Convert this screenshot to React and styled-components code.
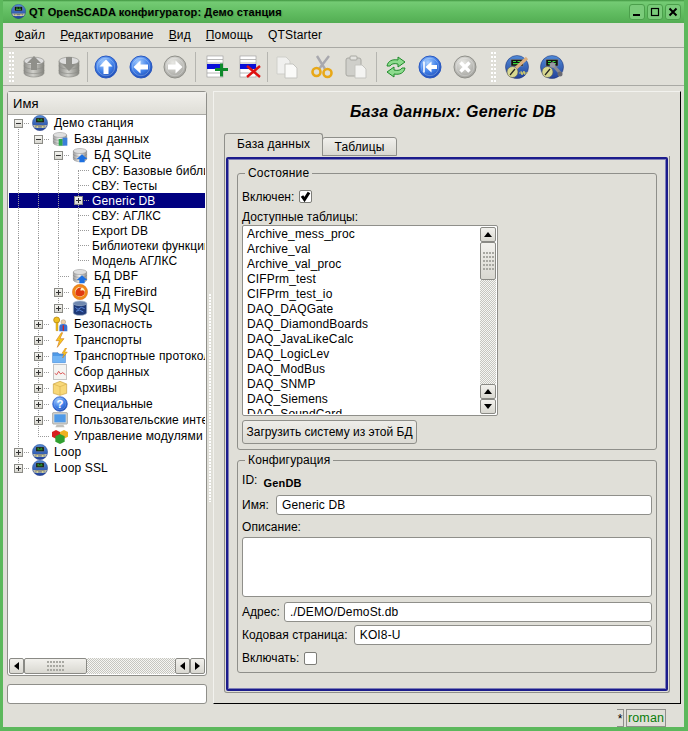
import styled, { createGlobalStyle, css } from "styled-components";

const GlobalStyle = createGlobalStyle`
  html, body {
    margin: 0;
    padding: 0;
    background: #e0dfd8;
  }
  * {
    box-sizing: border-box;
  }
`;

const BG = "#e0dfd8";
const LINE = "#8f8f8a";
const GREEN = "#5cb85c";

const Window = styled.div`
  width: 688px;
  height: 731px;
  display: flex;
  flex-direction: column;
  overflow: hidden;
  background: ${BG};
  border-left: 3px solid ${GREEN};
  border-right: 4px solid ${GREEN};
  border-bottom: 4px solid ${GREEN};
  font-family: "Liberation Sans", Arial, sans-serif;
  font-size: 12px;
  letter-spacing: 0.15px;
  color: #000;
`;

const TitleBar = styled.div`
  height: 23px;
  margin: 0 -4px 0 -3px;
  padding: 0 7px 0 11px;
  display: flex;
  align-items: center;
  flex: none;
  background: linear-gradient(#3f953f 0, #74cb74 2px, #5fbb5f 60%, #53ad53 100%);
`;

const TitleText = styled.div`
  margin-left: 3px;
  flex: 1;
  font-weight: bold;
  font-size: 11px;
  letter-spacing: 0.12px;
  text-shadow: 1px 1px 1px #4a9f4a;
`;

const WinButton = styled.div`
  width: 16px;
  height: 16px;
  margin-left: 2px;
  display: flex;
  align-items: center;
  justify-content: center;
  border: 1px solid #4b9f4b;
  border-radius: 3px;
  background: #7acb7a;
`;

const MenuBar = styled.div`
  height: 24px;
  padding-left: 12px;
  display: flex;
  align-items: center;
  gap: 15px;
  flex: none;
`;

const MenuItem = styled.span`
  white-space: nowrap;
`;

const Mnemonic = styled.span`
  text-decoration: underline;
`;

const ToolBar = styled.div`
  height: 39px;
  padding-left: 6px;
  display: flex;
  align-items: center;
  flex: none;
  border-top: 1px solid #a9a9a4;
  border-bottom: 1px solid #a9a9a4;
`;

const Handle = styled.div`
  width: 6px;
  height: 30px;
  margin: 0 ${(p) => p.$after}px 0 ${(p) => p.$before || 0}px;
  flex: none;
  background: radial-gradient(circle at 1px 1px, #fff 1px, #b8b8b2 1.2px, transparent 1.6px) 0 0 / 3px 4px;
`;

const ToolButton = styled.div`
  width: ${(p) => p.$w || 34.5}px;
  height: 30px;
  display: flex;
  align-items: center;
  justify-content: center;
  flex: none;
`;

const ToolSep = styled.div`
  width: 1px;
  height: 30px;
  margin: 0 ${(p) => p.$after}px 0 ${(p) => p.$before}px;
  flex: none;
  background: #b5b5b0;
`;

const Workspace = styled.div`
  height: 618px;
  flex: none;
  display: flex;
  padding: 5px 3px 0 4px;
`;

const LeftColumn = styled.div`
  width: 200px;
  display: flex;
  flex-direction: column;
  flex: none;
`;

const TreeFrame = styled.div`
  height: 585px;
  display: flex;
  flex-direction: column;
  flex: none;
  padding: 0 1px 1px 1px;
  border: 1px solid ${LINE};
  border-radius: 3px;
  background: #fff;
`;

const TreeHeader = styled.div`
  height: 23px;
  margin: 0 -1px;
  padding-left: 5px;
  display: flex;
  align-items: center;
  flex: none;
  font-size: 13px;
  border-bottom: 1px solid #a9a9a4;
  background: linear-gradient(#f1f0ec, #dfded7);
`;

const TreeBody = styled.div`
  flex: 1;
  min-height: 0;
  overflow: hidden;
`;

const TreeRow = styled.div`
  height: ${(p) => (p.$small ? 15 : 16)}px;
  display: flex;
  align-items: center;
  white-space: nowrap;
  ${(p) =>
    p.$selected &&
    css`
      background: #000080;
      color: #fff;
    `}
`;

const dotV = "repeating-linear-gradient(to bottom, #9a9a9a 0 1px, transparent 1px 2px)";
const dotH = "repeating-linear-gradient(to right, #9a9a9a 0 1px, transparent 1px 2px)";

const Guide = styled.div`
  width: 20px;
  align-self: stretch;
  flex: none;
  display: flex;
  align-items: center;
  padding-left: 5px;
  background-repeat: no-repeat;
  ${(p) => p.$kind === "pipe" && css`
    background-image: ${dotV};
    background-size: 1px 100%;
    background-position: 9px 0;
  `}
  ${(p) => p.$kind === "tee" && css`
    background-image: ${dotV}, ${dotH};
    background-size: 1px 100%, 11px 1px;
    background-position: 9px 0, 9px 50%;
  `}
  ${(p) => p.$kind === "end" && css`
    background-image: ${dotV}, ${dotH};
    background-size: 1px 50%, 11px 1px;
    background-position: 9px 0, 9px 50%;
  `}
  ${(p) => p.$kind === "start" && css`
    background-image: ${dotV}, ${dotH};
    background-size: 1px 50%, 11px 1px;
    background-position: 9px 100%, 9px 50%;
  `}
`;

const Expander = styled.div`
  width: 9px;
  height: 9px;
  border: 1px solid #8a8a85;
  background: linear-gradient(#f4f4f0, #d8d7d0);
  display: flex;
  align-items: center;
  justify-content: center;
  position: relative;
  &::before {
    content: "";
    width: 5px;
    height: 1px;
    background: #333;
  }
  ${(p) =>
    p.$plus &&
    css`
      &::after {
        content: "";
        position: absolute;
        left: 3px;
        top: 1px;
        width: 1px;
        height: 5px;
        background: #333;
      }
    `}
`;

const TreeIcon = styled.div`
  width: 16px;
  height: 16px;
  margin: 0 6px 0 3px;
  flex: none;
  display: flex;
`;

const TreeLabel = styled.span`
  margin-left: ${(p) => p.$indent || 0}px;
`;

const HScroll = styled.div`
  height: 16px;
  display: flex;
  flex: none;
`;

const VScroll = styled.div`
  width: 16px;
  display: flex;
  flex-direction: column;
  flex: none;
`;

const Track = styled.div`
  flex: 1;
  background: repeating-conic-gradient(#c6c6c0 0 25%, #f6f6f3 0 50%) 0 0 / 2px 2px;
`;

const ScrollBtn = styled.div`
  width: ${(p) => (p.$vertical ? "16px" : "15px")};
  height: ${(p) => (p.$vertical ? "15px" : "16px")};
  flex: none;
  display: flex;
  align-items: center;
  justify-content: center;
  border: 1px solid #8a8a85;
  border-radius: 2px;
  background: linear-gradient(#f2f1ed, #d9d8d1);
`;

const Arrow = styled.div`
  width: 0;
  height: 0;
  ${(p) => p.$dir === "left" && "border-top: 4px solid transparent; border-bottom: 4px solid transparent; border-right: 5px solid #000;"}
  ${(p) => p.$dir === "right" && "border-top: 4px solid transparent; border-bottom: 4px solid transparent; border-left: 5px solid #000;"}
  ${(p) => p.$dir === "up" && "border-left: 4px solid transparent; border-right: 4px solid transparent; border-bottom: 5px solid #000;"}
  ${(p) => p.$dir === "down" && "border-left: 4px solid transparent; border-right: 4px solid transparent; border-top: 5px solid #000;"}
`;

const Slider = styled.div`
  flex: none;
  display: flex;
  align-items: center;
  justify-content: center;
  border: 1px solid #8a8a85;
  border-radius: 2px;
  background: linear-gradient(#f2f1ed, #d9d8d1);
  width: ${(p) => p.$w}px;
  height: ${(p) => p.$h}px;
`;

const Grip = styled.div`
  width: ${(p) => p.$w}px;
  height: ${(p) => p.$h}px;
  background: radial-gradient(circle at 1px 1px, #a8a8a2 1px, transparent 1.2px) 0 0 / 3px 4px;
`;

const SearchBox = styled.div`
  height: 20px;
  margin-top: 8px;
  flex: none;
  border: 1px solid ${LINE};
  border-radius: 3px;
  background: #fff;
`;

const Splitter = styled.div`
  width: 6px;
  flex: none;
  display: flex;
  align-items: center;
  justify-content: center;
`;

const SplitterGrip = styled.div`
  width: 3px;
  height: 208px;
  background: radial-gradient(circle at 1px 1px, #fff 1px, #b5b5af 1.2px, transparent 1.6px) 0 0 / 3px 3px;
`;

const RightPanel = styled.div`
  width: 468px;
  height: 613px;
  flex: none;
  display: flex;
  flex-direction: column;
  padding: 0 10px 10px 10px;
  border-top: 1px solid #f2f2ee;
  border-left: 1px solid #f2f2ee;
  border-right: 1px solid #000;
  border-bottom: 1px solid #000;
`;

const PageTitle = styled.h1`
  height: 40px;
  margin: 0;
  display: flex;
  align-items: center;
  justify-content: center;
  flex: none;
  font-size: 16px;
  font-weight: bold;
  font-style: italic;
  letter-spacing: 0.3px;
  padding-left: 12px;
`;

const TabRow = styled.div`
  height: 23px;
  display: flex;
  align-items: flex-end;
  flex: none;
  margin-top: 1px;
`;

const Tab = styled.div`
  display: flex;
  align-items: center;
  justify-content: center;
  border: 1px solid ${LINE};
  border-radius: 3px 3px 0 0;
  ${(p) =>
    p.$active
      ? css`
          width: 99px;
          height: 23px;
          border-bottom: 0;
          background: ${BG};
          padding-bottom: 3px;
          position: relative;
          z-index: 1;
        `
      : css`
          width: 75px;
          height: 19px;
          margin-left: -1px;
          background: linear-gradient(#f1f0ec, #d9d8d1);
        `}
`;

const TabFrame = styled.div`
  flex: 1;
  min-height: 0;
  padding: 1px;
  border: 1px solid ${LINE};
  border-top: 0;
  border-radius: 0 0 3px 3px;
`;

const TabBody = styled.div`
  height: 100%;
  display: flex;
  flex-direction: column;
  gap: 3px;
  padding: 7px 9px 15px 9px;
  border: 2px solid #1c1c8c;
  border-radius: 2px;
  box-shadow: 0 0 0 1px #7f7fb8 inset;
`;

const Group = styled.fieldset`
  margin: 0;
  padding: 6px 4px 0 4px;
  border: 1px solid ${LINE};
  border-radius: 3px;
  display: flex;
  flex-direction: column;
  height: ${(p) => p.$h}px;
  flex: none;
  min-width: 0;
`;

const Legend = styled.legend`
  margin-left: 3px;
  padding: 0 3px;
  height: 14px;
  line-height: 14px;
`;

const FieldRow = styled.div`
  display: flex;
  align-items: center;
  flex: none;
  height: ${(p) => p.$h || 23}px;
  margin-top: ${(p) => p.$top || 0}px;
  padding-bottom: ${(p) => p.$pb || 0}px;
  white-space: nowrap;
  letter-spacing: 0.05px;
`;

const Check = styled.div`
  width: 13px;
  height: 13px;
  margin-left: ${(p) => p.$gap}px;
  flex: none;
  display: flex;
  align-items: center;
  justify-content: center;
  border: 1px solid #7d7d78;
  border-radius: 2px;
  background: #fff;
`;

const ListBox = styled.div`
  width: 256px;
  height: 191px;
  display: flex;
  flex: none;
  padding: 1px;
  border: 1px solid ${LINE};
  border-radius: 2px;
  background: #fff;
`;

const ListRows = styled.div`
  flex: 1;
  overflow: hidden;
  padding-left: 3px;
`;

const ListRow = styled.div`
  height: 15px;
  line-height: 15px;
  white-space: nowrap;
`;

const Button = styled.div`
  width: 175px;
  height: 24px;
  margin-top: 4px;
  display: flex;
  align-items: center;
  justify-content: center;
  flex: none;
  white-space: nowrap;
  letter-spacing: 0;
  border: 1px solid ${LINE};
  border-radius: 3px;
  background: linear-gradient(#eeede9, #dcdbd4);
`;

const IdLabel = styled.span`
  margin-top: -3px;
`;

const IdValue = styled.b`
  margin: 3px 0 0 6px;
  font-size: 11px;
  letter-spacing: 0.2px;
`;

const Input = styled.div`
  flex: 1;
  height: 20px;
  margin-left: ${(p) => p.$gap || 0}px;
  padding-left: 5px;
  display: flex;
  align-items: center;
  letter-spacing: 0.15px;
  border: 1px solid ${LINE};
  border-radius: 3px;
  background: #fff;
`;

const TextArea = styled.div`
  height: 60px;
  margin-top: 1px;
  flex: none;
  border: 1px solid ${LINE};
  border-radius: 3px;
  background: #fff;
`;

const StatusBar = styled.div`
  flex: 1;
  padding: 5px 18px 0 0;
  display: flex;
  justify-content: flex-end;
  align-items: flex-start;
  gap: 2px;
`;

const StatusStar = styled.div`
  width: 7px;
  height: 18px;
  display: flex;
  justify-content: center;
  border-top: 1px solid ${LINE};
  border-right: 1px solid ${LINE};
  border-bottom: 1px solid ${LINE};
  line-height: 18px;
  letter-spacing: 0;
`;

const StatusUser = styled.div`
  width: 40px;
  height: 18px;
  display: flex;
  align-items: center;
  justify-content: center;
  border: 1px solid ${LINE};
  color: #0a7d0a;
  font-size: 12.5px;
`;

const Defs = styled.svg`
  display: block;
  width: 0;
  height: 0;
  flex: none;
`;

const SharedDefs = () => (
  <Defs>
    <defs>
      <radialGradient id="blueBall" cx="40%" cy="30%" r="75%">
        <stop offset="0" stopColor="#a9d0ff" />
        <stop offset="0.55" stopColor="#3f7fe8" />
        <stop offset="1" stopColor="#1b48b0" />
      </radialGradient>
      <radialGradient id="greyBall" cx="40%" cy="30%" r="75%">
        <stop offset="0" stopColor="#e8e8e4" />
        <stop offset="1" stopColor="#a0a09b" />
      </radialGradient>
      <linearGradient id="stationBall" x1="0" y1="0" x2="0" y2="1">
        <stop offset="0" stopColor="#4f8ad8" />
        <stop offset="1" stopColor="#24439a" />
      </linearGradient>
      <linearGradient id="drum" x1="0" y1="0" x2="1" y2="0">
        <stop offset="0" stopColor="#9a9a9a" />
        <stop offset="0.45" stopColor="#efefef" />
        <stop offset="1" stopColor="#909090" />
      </linearGradient>
      <linearGradient id="greyDrum" x1="0" y1="0" x2="1" y2="0">
        <stop offset="0" stopColor="#8e8e8a" />
        <stop offset="0.45" stopColor="#cfcfca" />
        <stop offset="1" stopColor="#85857f" />
      </linearGradient>
    </defs>
  </Defs>
);

const Svg = ({ size = 24, children }) => (
  <svg width={size} height={size} viewBox="0 0 24 24">
    {children}
  </svg>
);

const Drum = ({ fill = "url(#drum)", stroke = "#7a7a7a" }) => (
  <g stroke={stroke} strokeWidth="0.6">
    <path d="M2 6v12c0 2 4.500 4 10 4s10-2 10-4V6z" fill={fill} />
    <ellipse cx="12" cy="6" rx="10" ry="3.800" fill="#dedede" />
    <path d="M2 10.500c0 2 4.500 3.600 10 3.600s10-1.600 10-3.600M2 15c0 2 4.500 3.600 10 3.600s10-1.600 10-3.600" fill="none" />
  </g>
);

const Station = ({ size, children }) => (
  <Svg size={size}>
    <circle cx="12" cy="12" r="11.500" fill="url(#stationBall)" stroke="#1c2f70" strokeWidth="0.5" />
    <rect x="6" y="4.500" width="12" height="6.500" fill="#111" stroke="#888" strokeWidth="0.5" />
    <path d="M8 6.500h3M12.500 6.500h3M8 8.700h8" stroke="#37d437" strokeWidth="1.200" />
    {children || (
      <g>
        <path d="M1.500 15h21l-2 4h-17z" fill="#b9b9a8" />
        <path d="M5 16.500h14" stroke="#444" strokeWidth="1" />
        <circle cx="8" cy="18" r="1.500" fill="#d8d890" />
        <circle cx="16" cy="18" r="1.500" fill="#d8d890" />
      </g>
    )}
  </Svg>
);

const Gauge = () => (
  <g>
    <circle cx="7.500" cy="17" r="5.500" fill="#d8d890" stroke="#555" strokeWidth="0.6" />
    <path d="M5 20l5-6" stroke="#222" strokeWidth="1.200" />
  </g>
);

const NavBall = ({ grey, children, size }) => (
  <Svg size={size}>
    <circle cx="12" cy="12" r="11" fill={grey ? "url(#greyBall)" : "url(#blueBall)"} stroke={grey ? "#90908a" : "#2a58c0"} />
    <circle cx="12" cy="12" r="8.700" fill="none" stroke="#fff" strokeOpacity="0.25" />
    {children}
  </Svg>
);

const TableIcon = ({ children }) => (
  <Svg>
    <rect x="2" y="1" width="16" height="21" fill="#fff" stroke="#999" strokeWidth="0.6" />
    <path d="M2 4.500h16M2 8h16M2 18h16" stroke="#9a9a9a" strokeWidth="0.7" />
    <rect x="2" y="9" width="16" height="5" fill="#0a10d8" />
    {children}
  </Svg>
);

const icons = {
  dbUp: (
    <Svg>
      <Drum fill="url(#greyDrum)" stroke="#8a8a85" />
      <path d="M12 1l7 7h-4v7H9V8H5z" fill="#8f8f8a" />
    </Svg>
  ),
  dbDown: (
    <Svg>
      <Drum fill="url(#greyDrum)" stroke="#8a8a85" />
      <path d="M12 16l7-7h-4V2H9v7H5z" fill="#8f8f8a" />
    </Svg>
  ),
  up: (
    <NavBall>
      <path d="M12 4.500l6.500 7h-4v7.500h-5v-7.500h-4z" fill="#fff" />
    </NavBall>
  ),
  left: (
    <NavBall>
      <path d="M4.500 12l7-6.500v4H19v5h-7.500v4z" fill="#fff" />
    </NavBall>
  ),
  right: (
    <NavBall grey>
      <path d="M19.500 12l-7-6.500v4H5v5h7.500v4z" fill="#fff" />
    </NavBall>
  ),
  add: (
    <TableIcon>
      <path d="M10 14.500h13M16.500 8.500v13" stroke="#0f8a2c" strokeWidth="3" />
    </TableIcon>
  ),
  del: (
    <TableIcon>
      <path d="M9 11l13 11M22 11L9 22" stroke="#e01010" strokeWidth="2.400" />
    </TableIcon>
  ),
  copy: (
    <Svg>
      <path d="M2 2h9l4 4v13H2z" fill="#f0f0ee" stroke="#cfcfca" />
      <path d="M10 9h8l4 4v10H10z" fill="#fafaf8" stroke="#c5c5c0" />
    </Svg>
  ),
  cut: (
    <Svg>
      <path d="M9 14L19 1M15 14L7 1" stroke="#a8a8ae" strokeWidth="2.400" />
      <circle cx="6.500" cy="17" r="4" fill="none" stroke="#e8a818" strokeWidth="2.600" />
      <circle cx="17.500" cy="18" r="4" fill="none" stroke="#e8a818" strokeWidth="2.600" />
    </Svg>
  ),
  paste: (
    <Svg>
      <rect x="2" y="3" width="15" height="18" rx="2" fill="#cfcfca" stroke="#a8a8a2" />
      <rect x="6" y="1" width="7" height="4" rx="1" fill="#e4e4e0" stroke="#a8a8a2" />
      <path d="M11 10h7l4 4v9H11z" fill="#f4f4f2" stroke="#c5c5c0" />
    </Svg>
  ),
  refresh: (
    <Svg>
      <path d="M3 11c1-5 5-7 11-6V2l7 5-7 5V9c-4-1-7 0-8 2z" fill="#8edb8e" stroke="#1f8a2a" />
      <path d="M21 13c-1 5-5 7-11 6v3l-7-5 7-5v3c4 1 7 0 8-2z" fill="#8edb8e" stroke="#1f8a2a" />
    </Svg>
  ),
  first: (
    <NavBall>
      <path d="M6 6.500v11" stroke="#fff" strokeWidth="1.600" />
      <path d="M7.500 12l6-5.500v3.500H19v4h-5.500v3.500z" fill="#fff" />
    </NavBall>
  ),
  stop: (
    <NavBall grey>
      <path d="M7.500 7.500l9 9M16.500 7.500l-9 9" stroke="#fff" strokeWidth="3.400" />
    </NavBall>
  ),
  stationEdit: (
    <Station>
      <Gauge />
      <path d="M14 18h9M16 16l1 4 2-4 1 4" stroke="#ece060" strokeWidth="0.8" fill="none" />
      <path d="M11 13L22 3" stroke="#dcb080" strokeWidth="3.200" />
    </Station>
  ),
  stationTool: (
    <Station>
      <Gauge />
      <path d="M12 9l9 10" stroke="#8a8a92" strokeWidth="3.200" />
      <circle cx="12.500" cy="10" r="2.800" fill="#9a9aa2" />
      <circle cx="20" cy="19" r="2.500" fill="#6a6a72" />
    </Station>
  ),
};

const treeIcons = {
  station: <Station size={16} />,
  dbs: (
    <Svg size={16}>
      <Drum />
      <rect x="10" y="12" width="6" height="10" fill="#2fa84f" />
      <rect x="16" y="10" width="7" height="12" fill="#3a7fd8" />
    </Svg>
  ),
  db: (
    <Svg size={16}>
      <Drum />
      <path d="M15 11l8 7h-4v5h-8v-5H7z" fill="#1c6fe0" />
    </Svg>
  ),
  fire: (
    <Svg size={16}>
      <circle cx="12" cy="12" r="11.500" fill="#f08a18" stroke="#d85a10" strokeWidth="0.6" />
      <circle cx="12" cy="12" r="7.500" fill="#fff2c8" />
      <path d="M6 17c-3-6 2-13 10-12-3 1-4 3-3 5 3-2 7 0 6 4-1 5-9 6-13 3z" fill="#e03a10" />
    </Svg>
  ),
  mysql: (
    <Svg size={16}>
      <path d="M2 5v14c0 2 4.500 4 10 4s10-2 10-4V5z" fill="#1f3a78" stroke="#9fb0c8" />
      <ellipse cx="12" cy="5" rx="10" ry="3.500" fill="#6f88b0" stroke="#9fb0c8" />
      <path d="M5 11l4 3 5-3 5 2M6 17l5-2 6 3" stroke="#5f8ce0" strokeWidth="1.400" fill="none" />
    </Svg>
  ),
  security: (
    <Svg size={16}>
      <circle cx="7" cy="6" r="4.500" fill="#f0c020" stroke="#a87808" />
      <path d="M6 10h3v12H6z" fill="#f0c020" stroke="#a87808" strokeWidth="0.6" />
      <circle cx="17" cy="9" r="3.500" fill="#f0d0a8" stroke="#807050" strokeWidth="0.5" />
      <path d="M11 23v-7c0-3 2-4 6-4s6 1 6 4v7z" fill="#3a6fd0" />
      <path d="M16 14h2v8h-2z" fill="#d02020" />
    </Svg>
  ),
  bolt: (
    <Svg size={16}>
      <path d="M14 1L6 13h5l-3 10 10-13h-6l4-9z" fill="#f8c820" stroke="#c86810" strokeWidth="0.8" />
    </Svg>
  ),
  folderBolt: (
    <Svg size={16}>
      <path d="M1 7h8l2 2h9v13H1z" fill="#4f9ae8" stroke="#2a5fb0" strokeWidth="0.7" />
      <path d="M1 12h19v10H1z" fill="#72b4f4" />
      <path d="M20 0l-5 8h3l-2 7 7-9h-4l3-6z" fill="#f8c820" stroke="#c86810" strokeWidth="0.6" />
    </Svg>
  ),
  chart: (
    <Svg size={16}>
      <rect x="2" y="1" width="20" height="22" fill="#f4f4f2" stroke="#aaa" />
      <path d="M4 14l3 2 3-5 3 4 3-2 4 3" stroke="#d84040" strokeWidth="1.300" fill="none" />
    </Svg>
  ),
  box: (
    <Svg size={16}>
      <path d="M12 2l10 4v14l-10 3-10-3V6z" fill="#f8d878" stroke="#c8a040" />
      <path d="M2 6l10 4 10-4M12 10v13" fill="none" stroke="#d8b050" />
    </Svg>
  ),
  help: (
    <NavBall size={16}>
      <text x="12" y="18" textAnchor="middle" fontSize="17" fontWeight="bold" fontFamily="Liberation Sans" fill="#fff">
        ?
      </text>
    </NavBall>
  ),
  monitor: (
    <Svg size={16}>
      <rect x="1" y="1" width="22" height="17" rx="1" fill="#d8d8d4" stroke="#8a8a85" />
      <rect x="3.500" y="3.500" width="17" height="12" fill="#4f9ae8" />
      <path d="M7 19h10l2 4H5z" fill="#c0c0bb" />
    </Svg>
  ),
  modules: (
    <Svg size={16}>
      <path d="M6 3l6 3v7l-6 3-6-3V6z" fill="#d82020" />
      <path d="M18 3l6 3v7l-6 3-6-3V6z" fill="#f0b020" />
      <path d="M12 9l7 3.500v8L12 24l-7-3.500v-8z" fill="#30a030" />
    </Svg>
  ),
};

const WinGlyph = ({ kind }) => (
  <svg width="10" height="10" viewBox="0 0 10 10">
    {kind === "min" && <rect x="1" y="7" width="7" height="2" fill="#000" />}
    {kind === "max" && <rect x="1.500" y="1.500" width="7" height="7" fill="none" stroke="#000" strokeWidth="1.200" />}
    {kind === "close" && <path d="M1.500 1.500l7 7M8.500 1.500l-7 7" stroke="#000" strokeWidth="2" />}
  </svg>
);

const menu = [
  ["Ф", "айл"],
  ["Р", "едактирование"],
  ["В", "ид"],
  ["П", "омощь"],
  ["", "QTStarter"],
];

const tree = [
  { g: [], exp: "minus", kind: "start", icon: "station", text: "Демо станция" },
  { g: ["pipe"], exp: "minus", kind: "start", icon: "dbs", text: "Базы данных" },
  { g: ["pipe", "pipe"], exp: "minus", kind: "start", icon: "db", text: "БД SQLite" },
  { g: ["pipe", "pipe", "pipe"], kind: "start", small: true, text: "СВУ: Базовые библиотеки" },
  { g: ["pipe", "pipe", "pipe"], kind: "tee", small: true, text: "СВУ: Тесты" },
  { g: ["pipe", "pipe", "pipe"], exp: "plus", kind: "tee", small: true, selected: true, text: "Generic DB" },
  { g: ["pipe", "pipe", "pipe"], kind: "tee", small: true, text: "СВУ: АГЛКС" },
  { g: ["pipe", "pipe", "pipe"], kind: "tee", small: true, text: "Export DB" },
  { g: ["pipe", "pipe", "pipe"], kind: "tee", small: true, text: "Библиотеки функций" },
  { g: ["pipe", "pipe", "pipe"], kind: "end", small: true, text: "Модель АГЛКС" },
  { g: ["pipe", "pipe"], kind: "tee", icon: "db", text: "БД DBF" },
  { g: ["pipe", "pipe"], exp: "plus", kind: "tee", icon: "fire", text: "БД FireBird" },
  { g: ["pipe", "pipe"], exp: "plus", kind: "end", icon: "mysql", text: "БД MySQL" },
  { g: ["pipe"], exp: "plus", kind: "tee", icon: "security", text: "Безопасность" },
  { g: ["pipe"], exp: "plus", kind: "tee", icon: "bolt", text: "Транспорты" },
  { g: ["pipe"], exp: "plus", kind: "tee", icon: "folderBolt", text: "Транспортные протоколы" },
  { g: ["pipe"], exp: "plus", kind: "tee", icon: "chart", text: "Сбор данных" },
  { g: ["pipe"], exp: "plus", kind: "tee", icon: "box", text: "Архивы" },
  { g: ["pipe"], exp: "plus", kind: "tee", icon: "help", text: "Специальные" },
  { g: ["pipe"], exp: "plus", kind: "tee", icon: "monitor", text: "Пользовательские интерфейсы" },
  { g: ["pipe"], kind: "end", icon: "modules", text: "Управление модулями" },
  { g: [], exp: "plus", kind: "tee", icon: "station", text: "Loop" },
  { g: [], exp: "plus", kind: "end", icon: "station", text: "Loop SSL" },
];

const tables = [
  "Archive_mess_proc",
  "Archive_val",
  "Archive_val_proc",
  "CIFPrm_test",
  "CIFPrm_test_io",
  "DAQ_DAQGate",
  "DAQ_DiamondBoards",
  "DAQ_JavaLikeCalc",
  "DAQ_LogicLev",
  "DAQ_ModBus",
  "DAQ_SNMP",
  "DAQ_Siemens",
  "DAQ_SoundCard",
];

export default function App() {
  return (
    <>
      <GlobalStyle />
      <SharedDefs />
      <Window>
        <TitleBar>
          <Station size={15} />
          <TitleText>QT OpenSCADA конфигуратор: Демо станция</TitleText>
          <WinButton>
            <WinGlyph kind="min" />
          </WinButton>
          <WinButton>
            <WinGlyph kind="max" />
          </WinButton>
          <WinButton>
            <WinGlyph kind="close" />
          </WinButton>
        </TitleBar>
        <MenuBar>
          {menu.map(([m, rest]) => (
            <MenuItem key={rest}>
              <Mnemonic>{m}</Mnemonic>
              {rest}
            </MenuItem>
          ))}
        </MenuBar>
        <ToolBar>
          <Handle $after={2} />
          <ToolButton>{icons.dbUp}</ToolButton>
          <ToolButton>{icons.dbDown}</ToolButton>
          <ToolSep $before={1} $after={1} />
          <ToolButton>{icons.up}</ToolButton>
          <ToolButton>{icons.left}</ToolButton>
          <ToolButton>{icons.right}</ToolButton>
          <ToolSep $before={2.5} $after={4} />
          <ToolButton $w={34}>{icons.add}</ToolButton>
          <ToolButton $w={32}>{icons.del}</ToolButton>
          <ToolSep $before={1} $after={2} />
          <ToolButton>{icons.copy}</ToolButton>
          <ToolButton>{icons.cut}</ToolButton>
          <ToolButton>{icons.paste}</ToolButton>
          <ToolSep $before={2} $after={2} />
          <ToolButton>{icons.refresh}</ToolButton>
          <ToolButton>{icons.first}</ToolButton>
          <ToolButton>{icons.stop}</ToolButton>
          <Handle $before={9} $after={3} />
          <ToolButton>{icons.stationEdit}</ToolButton>
          <ToolButton>{icons.stationTool}</ToolButton>
        </ToolBar>
        <Workspace>
          <LeftColumn>
            <TreeFrame>
              <TreeHeader>Имя</TreeHeader>
              <TreeBody>
                {tree.map((row) => (
                  <TreeRow key={row.text} $small={row.small} $selected={row.selected}>
                    {row.g.map((kind, i) => (
                      <Guide key={i} $kind={kind} />
                    ))}
                    <Guide $kind={row.kind}>{row.exp && <Expander $plus={row.exp === "plus"} />}</Guide>
                    {row.icon && <TreeIcon>{treeIcons[row.icon]}</TreeIcon>}
                    <TreeLabel $indent={row.icon ? 0 : 3}>{row.text}</TreeLabel>
                  </TreeRow>
                ))}
              </TreeBody>
              <HScroll>
                <ScrollBtn>
                  <Arrow $dir="left" />
                </ScrollBtn>
                <Slider $w={63} $h={16}>
                  <Grip $w={18} $h={11} />
                </Slider>
                <Track />
                <ScrollBtn>
                  <Arrow $dir="left" />
                </ScrollBtn>
                <ScrollBtn>
                  <Arrow $dir="right" />
                </ScrollBtn>
              </HScroll>
            </TreeFrame>
            <SearchBox />
          </LeftColumn>
          <Splitter>
            <SplitterGrip />
          </Splitter>
          <RightPanel>
            <PageTitle>База данных: Generic DB</PageTitle>
            <TabRow>
              <Tab $active>База данных</Tab>
              <Tab>Таблицы</Tab>
            </TabRow>
            <TabFrame>
              <TabBody>
                <Group $h={284}>
                  <Legend>Состояние</Legend>
                  <FieldRow $pb={2}>
                    Включен:
                    <Check $gap={5}>
                      <svg width="11" height="11" viewBox="0 0 11 11">
                        <path d="M2 5l2.500 3.500L9 1.500" fill="none" stroke="#000" strokeWidth="3" />
                      </svg>
                    </Check>
                  </FieldRow>
                  <FieldRow $h={16}>Доступные таблицы:</FieldRow>
                  <ListBox>
                    <ListRows>
                      {tables.map((t) => (
                        <ListRow key={t}>{t}</ListRow>
                      ))}
                    </ListRows>
                    <VScroll>
                      <ScrollBtn $vertical>
                        <Arrow $dir="up" />
                      </ScrollBtn>
                      <Slider $w={16} $h={38}>
                        <Grip $w={11} $h={18} />
                      </Slider>
                      <Track />
                      <ScrollBtn $vertical>
                        <Arrow $dir="up" />
                      </ScrollBtn>
                      <ScrollBtn $vertical>
                        <Arrow $dir="down" />
                      </ScrollBtn>
                    </VScroll>
                  </ListBox>
                  <Button>Загрузить систему из этой БД</Button>
                </Group>
                <Group $h={220}>
                  <Legend>Конфигурация</Legend>
                  <FieldRow $h={16}>
                    <IdLabel>ID:</IdLabel>
                    <IdValue>GenDB</IdValue>
                  </FieldRow>
                  <FieldRow $h={24} $top={4}>
                    Имя:
                    <Input $gap={7}>Generic DB</Input>
                  </FieldRow>
                  <FieldRow $h={19}>Описание:</FieldRow>
                  <TextArea />
                  <FieldRow $h={22} $top={4}>
                    Адрес:
                    <Input $gap={4}>./DEMO/DemoSt.db</Input>
                  </FieldRow>
                  <FieldRow>
                    Кодовая страница:
                    <Input $gap={6}>KOI8-U</Input>
                  </FieldRow>
                  <FieldRow $h={24}>
                    Включать:
                    <Check $gap={5} />
                  </FieldRow>
                </Group>
              </TabBody>
            </TabFrame>
          </RightPanel>
        </Workspace>
        <StatusBar>
          <StatusStar>*</StatusStar>
          <StatusUser>roman</StatusUser>
        </StatusBar>
      </Window>
    </>
  );
}
